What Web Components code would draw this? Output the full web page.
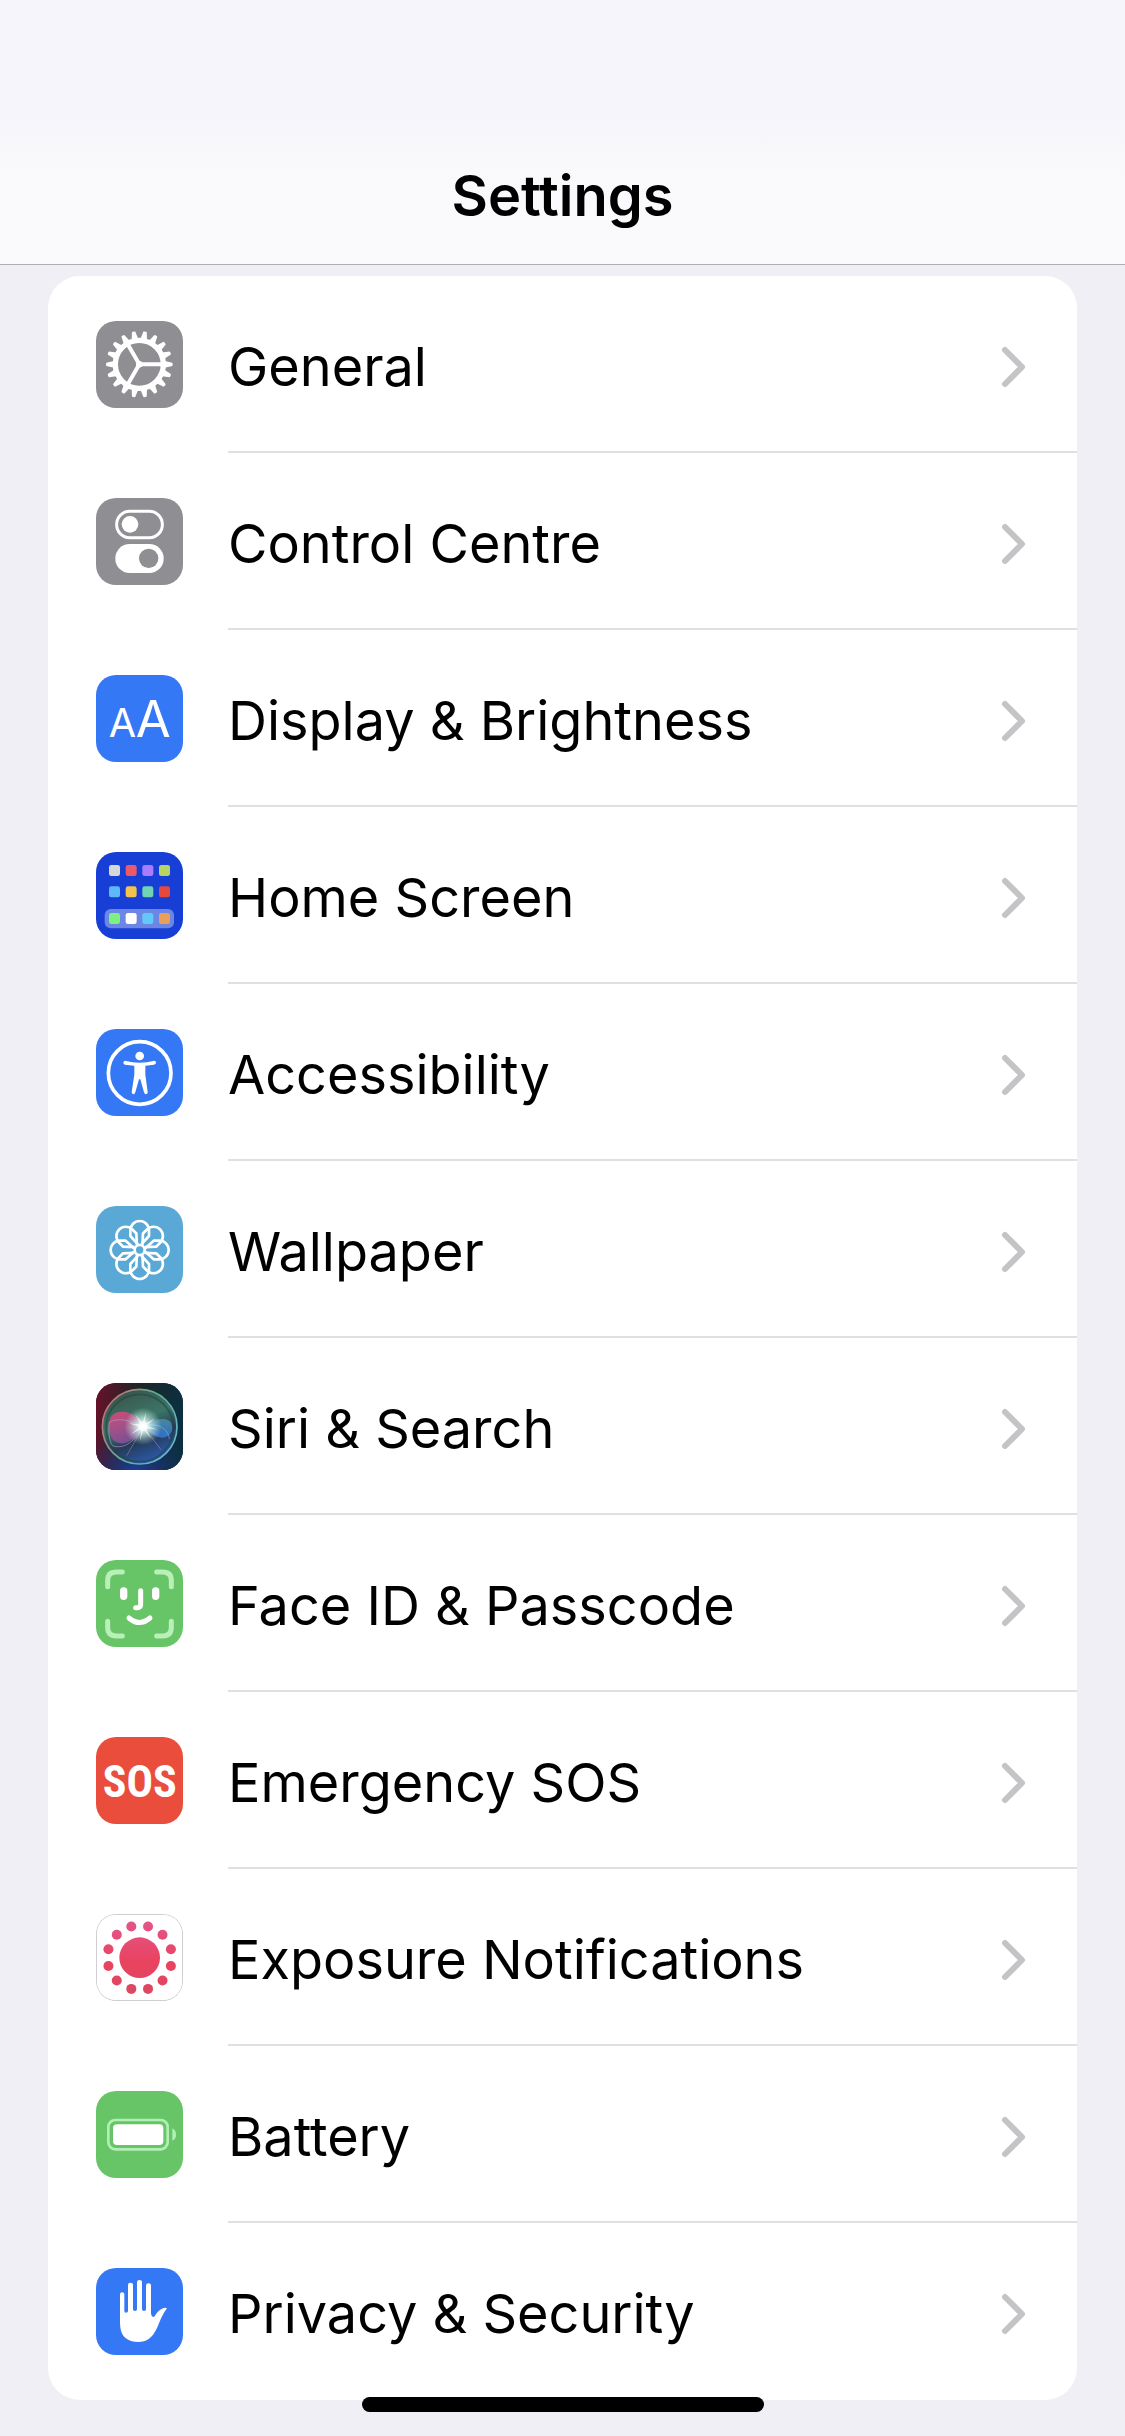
<!DOCTYPE html>
<html lang="en">
<head>
<meta charset="utf-8">
<meta name="viewport" content="width=device-width, initial-scale=1">
<title>Settings</title>
<style>
  body { margin: 0; background: #f0eff5; color: #000; font-family: Inter, "Noto Sans", sans-serif; }
</style>
</head>
<body>
<settings-screen>
  <nav-bar slot="bar">Settings</nav-bar>
  <settings-group>
    <settings-row icon="general">General</settings-row>
    <settings-row icon="control">Control Centre</settings-row>
    <settings-row icon="display">Display &amp; Brightness</settings-row>
    <settings-row icon="home">Home Screen</settings-row>
    <settings-row icon="accessibility">Accessibility</settings-row>
    <settings-row icon="wallpaper">Wallpaper</settings-row>
    <settings-row icon="siri">Siri &amp; Search</settings-row>
    <settings-row icon="face">Face ID &amp; Passcode</settings-row>
    <settings-row icon="sos">Emergency SOS</settings-row>
    <settings-row icon="exposure">Exposure Notifications</settings-row>
    <settings-row icon="battery">Battery</settings-row>
    <settings-row icon="privacy">Privacy &amp; Security</settings-row>
  </settings-group>
</settings-screen>

<script>
const around = (n, start, shape) =>
  Array.from({ length: n }, (_, i) => `<g transform="rotate(${start + i * 360 / n})">${shape}</g>`).join('');

const appTiles = [
  [39, ['#d6d6d6', '#ec5a68', '#a97bff', '#b6d364']],
  [103, ['#5fb8fa', '#f3c24f', '#6fd3b4', '#e5493b']],
  [183, ['#7df083', '#ffffff', '#62c8fa', '#eba05a']]
].map(([y, row]) => row.map((c, i) =>
  `<rect x="${39 + i * 50}" y="${y}" width="33" height="33" rx="7" fill="${c}"/>`).join('')).join('');

/* Each glyph is drawn on a 261-unit square tile. */
const ICONS = {
  general: ['#8e8e93', `<g transform="translate(130 130)" fill="#fff">
    ${around(18, 0, '<path d="M-10-76L-5-99Q0-101 5-99L10-76Z" transform="rotate(90)"/>')}
    <circle r="72" fill="none" stroke="#fff" stroke-width="16"/>
    ${around(3, 0, '<path d="M0-6H68V6H0Z"/>')}<circle r="10"/></g>`],
  control: ['#8e8e93', `<rect x="62" y="40" width="137" height="79" rx="39" fill="none" stroke="#fff" stroke-width="9"/>
    <circle cx="102" cy="79" r="25" fill="#fff"/>
    <rect x="58" y="138" width="145" height="87" rx="43" fill="#fff"/><circle cx="158" cy="181" r="29" fill="#8e8e93"/>`],
  display: ['#3478f6', `<g fill="#fff" text-anchor="middle" font-family="Inter, sans-serif" font-weight="400">
    <text x="79" y="187" font-size="119">A</text><text x="172" y="187" font-size="152">A</text></g>`],
  home: ['#173fd6', `<rect x="26" y="171" width="208" height="58" rx="18" fill="#6c86e4"/>${appTiles}`],
  accessibility: ['#3478f6', `<circle cx="131" cy="132" r="94" fill="none" stroke="#fff" stroke-width="11"/>
    <circle cx="131" cy="81" r="13" fill="#fff"/>
    <path fill="#fff" d="M87 95Q109 101 131 101T175 95Q181 96 180 102Q179 106 174 107L148 110V137L155 189Q155 196 150 196Q146 196 144 190L133 151H129L118 190Q116 196 112 196Q107 195 107 189L115 137V110L87 107Q82 106 82 101Q82 96 87 95Z"/>`],
  wallpaper: ['#5aa8d6', `<g transform="translate(131 132)" fill="none" stroke="#fff" stroke-width="8" stroke-linejoin="round">
    <circle r="15"/>${around(8, 0, '<path d="M-5-17L-28-42V-59A28 28 0 0 1 28-59V-42L5-17"/>')}</g>`],
  siri: ['#1a1a2e', `<defs>
      <linearGradient id="bg" x1="0" x2="1" y2=".15"><stop stop-color="#6b1029"/><stop offset=".5" stop-color="#1d2626"/><stop offset="1" stop-color="#0b3040"/></linearGradient>
      <radialGradient id="low" cx=".45" cy="1.05" r=".6"><stop stop-color="#1d3f9e"/><stop offset="1" stop-color="#1d2f7e" stop-opacity="0"/></radialGradient>
      <linearGradient id="orb" x1=".2" y1="0" x2=".6" y2="1"><stop stop-color="#3c5045"/><stop offset=".45" stop-color="#3b7568"/><stop offset=".7" stop-color="#263b57"/><stop offset="1" stop-color="#2c5cae"/></linearGradient>
      <linearGradient id="rim" x1="0" y1=".2" x2="1" y2=".7"><stop stop-color="#d06a76"/><stop offset=".5" stop-color="#5fae91"/><stop offset="1" stop-color="#6ab4cf"/></linearGradient>
      <linearGradient id="pink" y2="1" x2=".3"><stop stop-color="#dc4a78"/><stop offset="1" stop-color="#85509a"/></linearGradient>
      <linearGradient id="blue" y2="1" x2="0"><stop stop-color="#4d8fa8"/><stop offset="1" stop-color="#3478d8"/></linearGradient>
      <radialGradient id="glow"><stop offset=".1" stop-color="#fff"/><stop offset=".35" stop-color="#e4fff8" stop-opacity=".75"/><stop offset="1" stop-color="#bfeee0" stop-opacity="0"/></radialGradient>
    </defs>
    <rect width="261" height="261" fill="url(#bg)"/><rect width="261" height="261" fill="url(#low)"/>
    <circle cx="131" cy="131" r="112" fill="url(#orb)" stroke="url(#rim)" stroke-width="5"/>
    <circle cx="131" cy="135" r="101" fill="none" stroke="#1f4640" stroke-width="5" opacity=".6"/>
    <path d="M140 130C125 95 90 78 58 90C30 104 36 158 54 174C88 194 120 170 140 130Z" fill="url(#pink)" opacity=".9"/>
    <path d="M40 118C72 100 108 116 140 132C112 185 76 198 50 188C40 180 36 140 40 118" fill="none" stroke="#c6a2df" stroke-width="3" opacity=".55"/>
    <path d="M140 132C165 108 214 98 226 120C236 148 218 164 196 164C170 162 158 140 140 132Z" fill="url(#blue)" opacity=".85"/>
    <path d="M142 131C174 118 216 130 220 168" fill="none" stroke="#83cbf4" stroke-width="2" opacity=".7"/>
    <path d="M142 131L195 200M142 131L92 218" stroke="#c893bd" stroke-width="3" opacity=".45"/>
    <circle cx="141" cy="130" r="56" fill="url(#glow)"/>
    <g transform="translate(141 130)" fill="#fff" opacity=".7">${around(8, 12, '<path d="M-4 0L0-44L4 0Z"/>')}<circle r="15"/></g>`],
  face: ['#67c567', `<g fill="none" stroke-width="15" stroke-linecap="round">
    <path stroke="#b9efb9" d="M35 80V62Q35 36 61 36H79M182 36H200Q226 36 226 62V80M226 184V202Q226 228 200 228H182M79 228H61Q35 228 35 202V184"/>
    <path stroke="#fff" d="M134 92V133Q134 143 124 143H119M99 174Q130 201 162 174"/></g>
    <rect x="72" y="82" width="22" height="38" rx="11" fill="#fff"/><rect x="168" y="82" width="22" height="38" rx="11" fill="#fff"/>`],
  sos: ['#ea4d3c', `<text x="131" y="181" text-anchor="middle" fill="#fff" font-family="'Roboto Condensed', 'Liberation Sans Narrow', 'Liberation Sans', sans-serif" font-weight="700" font-size="132">SOS</text>`],
  exposure: ['#ffffff', `<defs><linearGradient id="exp" gradientUnits="userSpaceOnUse" x1="0" y1="24" x2="0" y2="240"><stop stop-color="#e3558a"/><stop offset=".55" stop-color="#e9435f"/><stop offset="1" stop-color="#dc4862"/></linearGradient></defs>
    <rect x="1" y="1" width="259" height="259" rx="58" fill="none" stroke="#c6c6ca" stroke-width="3"/>
    <g fill="url(#exp)"><circle cx="131" cy="131" r="61"/>
    ${Array.from({ length: 12 }, (_, i) => { const a = (15 + i * 30) * Math.PI / 180;
      return `<circle cx="${(131 + 97 * Math.cos(a)).toFixed(1)}" cy="${(131 + 97 * Math.sin(a)).toFixed(1)}" r="15"/>`; }).join('')}</g>`],
  battery: ['#67c567', `<rect x="37" y="87" width="178" height="88" rx="21" fill="none" stroke="#b0f0b2" stroke-width="8"/>
    <rect x="51" y="100" width="151" height="62" rx="12" fill="#fff"/><path d="M229 112Q240 118 240 131T229 149Z" fill="#b0f0b2"/>`],
  privacy: ['#3478f6', `<path fill="#fff" d="M72 79Q72 73 78 73Q85 73 85 79V128Q85 134 90 134Q96 134 96 128V51Q96 44 103 44Q111 44 111 51V124Q111 129 117 129Q123 129 123 124V43Q123 36 130 36Q138 36 138 43V124Q138 129 144 129Q150 129 150 124V53Q150 46 157 46Q165 46 165 53V136Q167 151 176 145Q184 129 198 122Q209 117 213 121Q205 131 196 149C184 176 178 198 158 213C144 225 108 225 93 213C78 203 72 188 72 161Z"/>`]
};

class ShadowElement extends HTMLElement {
  connectedCallback() {
    if (!this.shadowRoot) this.attachShadow({ mode: 'open' }).innerHTML = this.render();
  }
}

customElements.define('settings-icon', class extends ShadowElement {
  render() {
    const [tile, glyph] = ICONS[this.getAttribute('name')];
    return `<style>
      :host { display: block; flex: none; width: 87px; height: 87px; border-radius: 20px; overflow: hidden; background: ${tile}; }
      svg { display: block; width: 100%; height: 100%; }
    </style><svg viewBox="0 0 261 261" aria-hidden="true">${glyph}</svg>`;
  }
});

customElements.define('settings-row', class extends ShadowElement {
  render() {
    return `<style>
      :host { display: block; }
      a { display: flex; align-items: center; gap: 45px; padding-left: 48px; color: inherit; text-decoration: none; }
      .body { flex: 1; display: flex; align-items: center; justify-content: space-between; padding: 56px 50px 49px 0;
              border-bottom: 2px solid #e0e0e2; font-size: 54px; line-height: 70px; }
      :host(:last-of-type) .body { border-bottom-color: transparent; }
      .chevron { flex: none; width: 26px; height: 44px; }
    </style>
    <a href="#${this.getAttribute('icon')}">
      <settings-icon name="${this.getAttribute('icon')}"></settings-icon>
      <span class="body"><slot></slot>
        <svg class="chevron" viewBox="0 0 26 44" aria-hidden="true"><path d="M4 5L21 22L4 39" fill="none" stroke="#c4c4c6" stroke-width="6" stroke-linecap="round" stroke-linejoin="round"/></svg>
      </span>
    </a>`;
  }
});

customElements.define('settings-group', class extends ShadowElement {
  render() {
    return `<style>
      :host { display: flex; flex-direction: column; background: #fff; border-radius: 32px; overflow: hidden; }
    </style><slot></slot>`;
  }
});

customElements.define('nav-bar', class extends ShadowElement {
  render() {
    return `<style>
      :host { display: block; background: linear-gradient(#f6f5fb 45%, #f9f9fb 60%, #fafafc); border-bottom: 1px solid #aeadb2; }
      h1 { margin: 0; padding: 160px 48px 32px; font-size: 56px; line-height: 72px; font-weight: 600; text-align: center; }
    </style><h1><slot></slot></h1>`;
  }
});

customElements.define('settings-screen', class extends ShadowElement {
  render() {
    return `<style>
      :host { display: flex; flex-direction: column; min-height: 100vh; }
      main { padding: 11px 48px 36px; }
      .home-bar { position: fixed; bottom: 24px; left: 50%; width: 402px; height: 15px; margin-left: -201px; border-radius: 8px; background: #000; }
    </style><slot name="bar"></slot><main><slot></slot></main><div class="home-bar"></div>`;
  }
});
</script>
</body>
</html>
